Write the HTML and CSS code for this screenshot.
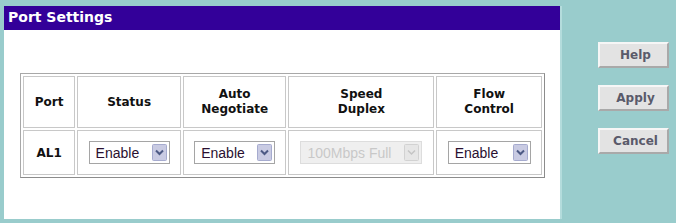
FILE: index.html
```html
<!DOCTYPE html>
<html>
<head>
<meta charset="utf-8">
<link rel="stylesheet" href="styles.css">
</head>
<body>
<div class="page">
  <div class="panel">
    <div class="panel-title">Port Settings</div>
    <div class="panel-body">
      <table class="ports">
        <tr class="head">
          <th class="c-port">Port</th>
          <th class="c-status">Status</th>
          <th class="c-auto">Auto<br>Negotiate</th>
          <th class="c-speed">Speed<br>Duplex</th>
          <th class="c-flow">Flow<br>Control</th>
        </tr>
        <tr class="data">
          <td class="port-name">AL1</td>
          <td><span class="sel w81"><select><option>Enable</option><option>Disable</option></select><svg class="arrow" viewBox="0 0 15 17" width="15" height="17"><rect x="0.5" y="0.5" width="14" height="16" rx="1" fill="#c9cbe3" stroke="#a6abcf"/><path d="M4 6.5 L7.5 10 L11 6.5" fill="none" stroke="#4d5a85" stroke-width="2"/></svg></span></td>
          <td><span class="sel w81"><select><option>Enable</option><option>Disable</option></select><svg class="arrow" viewBox="0 0 15 17" width="15" height="17"><rect x="0.5" y="0.5" width="14" height="16" rx="1" fill="#c9cbe3" stroke="#a6abcf"/><path d="M4 6.5 L7.5 10 L11 6.5" fill="none" stroke="#4d5a85" stroke-width="2"/></svg></span></td>
          <td><span class="sel w122 disabled"><select disabled><option>100Mbps Full</option></select><svg class="arrow" viewBox="0 0 15 17" width="15" height="17"><rect x="0.5" y="0.5" width="14" height="16" rx="1" fill="#e6e6e6" stroke="#d2d2d2"/><path d="M4 6.5 L7.5 10 L11 6.5" fill="none" stroke="#c4c4c4" stroke-width="1.5"/></svg></span></td>
          <td><span class="sel w83"><select><option>Enable</option><option>Disable</option></select><svg class="arrow" viewBox="0 0 15 17" width="15" height="17"><rect x="0.5" y="0.5" width="14" height="16" rx="1" fill="#c9cbe3" stroke="#a6abcf"/><path d="M4 6.5 L7.5 10 L11 6.5" fill="none" stroke="#4d5a85" stroke-width="2"/></svg></span></td>
        </tr>
      </table>
    </div>
  </div>
  <div class="side">
    <button class="btn">Help</button>
    <button class="btn">Apply</button>
    <button class="btn">Cancel</button>
  </div>
</div>
</body>
</html>
```
FILE: styles.css
```css
html, body {
  margin: 0;
  padding: 0;
}
body {
  background: #99cccc;
  width: 676px;
  height: 223px;
  overflow: hidden;
  font-family: "DejaVu Sans", Verdana, sans-serif;
}
.page {
  display: flex;
  align-items: flex-start;
  padding: 6px 0 0 4px;
  height: 217px;
}
.panel {
  width: 556px;
  height: 213px;
  background: #ffffff;
  border-right: 2px solid #b4dcdc;
  display: flex;
  flex-direction: column;
}
.panel-title {
  height: 24px;
  background: #330099;
  color: #ffffff;
  font-weight: bold;
  font-size: 14px;
  line-height: 23px;
  padding-left: 4px;
}
.panel-body {
  padding: 43px 0 0 16px;
}
.ports {
  border-collapse: separate;
  border-spacing: 2px;
  border: 1px solid #a8a8a8;
  border-right-color: #8c8c8c;
  border-bottom-color: #8c8c8c;
  width: 525px;
}
.ports th, .ports td {
  border: 1px solid #c8c8c8;
  text-align: center;
  vertical-align: middle;
  padding: 0;
  font-size: 12px;
  font-weight: bold;
  color: #111111;
}
.head th {
  height: 50px;
  line-height: 15px;
}
.data td {
  height: 43px;
}
.c-port { width: 50px; }
.c-status { width: 101px; }
.c-auto { width: 101px; }
.c-speed { width: 143px; }
.c-flow { width: 103px; }
.port-name {
  font-size: 12px;
}
.sel {
  position: relative;
  display: inline-block;
  vertical-align: middle;
  height: 23px;
}
.sel select {
  -webkit-appearance: none;
  appearance: none;
  box-sizing: border-box;
  width: 100%;
  height: 23px;
  margin: 0;
  border: 1px solid #a5a5a5;
  border-radius: 0;
  background: #ffffff;
  font-family: "Liberation Sans", Arial, sans-serif;
  font-size: 14px;
  color: #2a1030;
  padding: 0 0 0 6px;
  outline: none;
}
.sel .arrow {
  position: absolute;
  right: 3px;
  top: 3px;
  pointer-events: none;
}
.w81 { width: 81px; }
.w83 { width: 83px; }
.w122 { width: 122px; }
.sel.disabled select {
  background: #e9e9e9;
  border-color: #cfcfcf;
  color: #b2b2b2;
}
.side {
  display: flex;
  flex-direction: column;
  gap: 17px;
  padding: 36px 0 0 36px;
}
.btn {
  width: 71px;
  height: 26px;
  box-sizing: border-box;
  background: #e3e3e3;
  border: 2px solid;
  border-color: #f6f6f6 #a9a9a9 #a9a9a9 #f6f6f6;
  font-family: "DejaVu Sans", Verdana, sans-serif;
  font-weight: bold;
  font-size: 12px;
  color: #5a5a6a;
  padding: 0 0 0 4px;
  margin: 0;
}
```
